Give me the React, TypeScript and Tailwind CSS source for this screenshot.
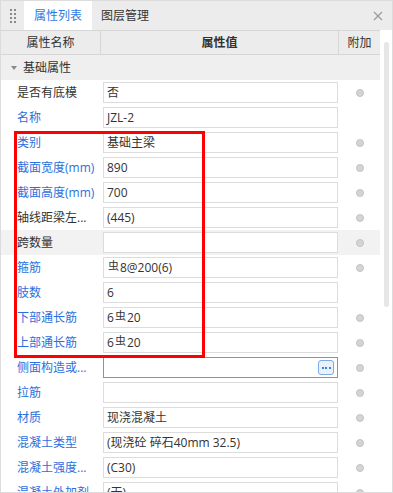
import React from 'react';

type Row = {
  label: string;
  value: React.ReactNode;
  blue?: boolean;
  dot?: boolean;
  hover?: boolean;
  focus?: boolean;
};

const Rebar = () => (
  <span className="inline-block text-[11px] leading-none align-[2px] mx-[1px]">虫</span>
);

const rows: Row[] = [
  { label: '是否有底模', value: '否', dot: true },
  { label: '名称', value: 'JZL-2', blue: true },
  { label: '类别', value: '基础主梁', blue: true, dot: true },
  { label: '截面宽度(mm)', value: '890', blue: true, dot: true },
  { label: '截面高度(mm)', value: '700', blue: true, dot: true },
  { label: '轴线距梁左...', value: '(445)', dot: true },
  { label: '跨数量', value: '', dot: true, hover: true },
  { label: '箍筋', value: <><Rebar />8@200(6)</>, blue: true, dot: true },
  { label: '肢数', value: '6', blue: true },
  { label: '下部通长筋', value: <>6<Rebar />20</>, blue: true, dot: true },
  { label: '上部通长筋', value: <>6<Rebar />20</>, blue: true, dot: true },
  { label: '侧面构造或...', value: '', blue: true, dot: true, focus: true },
  { label: '拉筋', value: '', blue: true, dot: true },
  { label: '材质', value: '现浇混凝土', blue: true, dot: true },
  { label: '混凝土类型', value: '(现浇砼 碎石40mm 32.5)', blue: true, dot: true },
  { label: '混凝土强度...', value: '(C30)', blue: true, dot: true },
  { label: '混凝土外加剂', value: '(无)', blue: true, dot: true },
];

function PropRow({ row }: { row: Row }) {
  return (
    <div className={`flex h-[25px] items-center ${row.hover ? 'bg-[#f2f2f2]' : ''}`}>
      <div
        className={`w-[100px] shrink-0 pl-[16px] whitespace-nowrap overflow-hidden ${
          row.blue ? 'text-[#2b6fdc]' : 'text-[#333]'
        }`}
      >
        {row.label}
      </div>
      <div className="w-[238px] shrink-0 pl-[2px] pr-[1px]">
        <div
          className={`h-[21px] bg-white border flex items-center pl-[3px] pr-[3px] whitespace-nowrap text-[#333] ${
            row.focus ? 'border-[#6d98d8]' : 'border-[#dcdcdc]'
          }`}
        >
          <span className="flex-1">{row.value}</span>
          {row.focus && (
            <span className="w-[16px] h-[15px] rounded-[3px] border border-[#7fa9e3] bg-[#e9f1fc] flex items-center justify-center gap-[1.5px]">
              <span className="w-[2px] h-[2px] bg-[#3f7fdc]" />
              <span className="w-[2px] h-[2px] bg-[#3f7fdc]" />
              <span className="w-[2px] h-[2px] bg-[#3f7fdc]" />
            </span>
          )}
        </div>
      </div>
      <div className="w-[41px] shrink-0 flex justify-center">
        {row.dot && (
          <span className="w-[8px] h-[8px] rounded-full bg-[#d4d4d4] border border-[#c2c2c2]" />
        )}
      </div>
    </div>
  );
}

export default function App() {
  return (
    <div className="w-[393px] h-[493px] overflow-hidden bg-white border border-[#dcdcdc] relative text-[12px] font-['Segoe_UI','Open_Sans','Noto_Sans_CJK_SC',sans-serif]">
      {/* tab bar */}
      <div className="h-[29px] bg-[#ececec] flex items-stretch">
        <div className="w-[23px] flex items-center justify-center">
          <div className="grid grid-cols-2 gap-x-[2px] gap-y-[2px]">
            {Array.from({ length: 8 }).map((_, i) => (
              <span key={i} className="w-[2px] h-[2px] bg-[#8a8a8a]" />
            ))}
          </div>
        </div>
        <div className="w-[68px] bg-white flex items-center justify-center text-[#2b7be6]">属性列表</div>
        <div className="w-[66px] flex items-center justify-center text-[#333]">图层管理</div>
        <div className="flex-1" />
        <div className="w-[28px] flex items-center justify-center text-[#9a9a9a]">
          <svg width="10" height="10" viewBox="0 0 10 10" stroke="currentColor" strokeWidth="1.2">
            <path d="M1 1L9 9M9 1L1 9" />
          </svg>
        </div>
      </div>

      <div className="flex">
        <div className="w-[379px] shrink-0">
          {/* header */}
          <div className="flex h-[25px] bg-[#ececec] border-b border-t border-[#d6d6d6] text-[#333]">
            <div className="w-[100px] flex items-center justify-center border-r border-[#d6d6d6]">属性名称</div>
            <div className="w-[238px] flex items-center justify-center border-r border-[#d6d6d6] font-bold">属性值</div>
            <div className="flex-1 flex items-center justify-center">附加</div>
          </div>
          {/* section */}
          <div className="h-[25px] bg-[#efefef] flex items-center text-[#333]">
            <svg width="6" height="4" viewBox="0 0 6 4" className="ml-[10px] mr-[6px]">
              <path d="M0 0H6L3 4Z" fill="#8a8a8a" />
            </svg>
            基础属性
          </div>
          {rows.map((r, i) => (
            <PropRow key={i} row={r} />
          ))}
        </div>
        <div className="flex-1 flex justify-center pt-[12px]">
          <div className="w-[5px] h-[265px] rounded-[3px] bg-[#e6e6e6]" />
        </div>
      </div>

      {/* red highlight */}
      <div className="absolute left-[13px] top-[130px] w-[191px] h-[227px] border-[3px] border-[#ff0000] pointer-events-none" />
    </div>
  );
}
